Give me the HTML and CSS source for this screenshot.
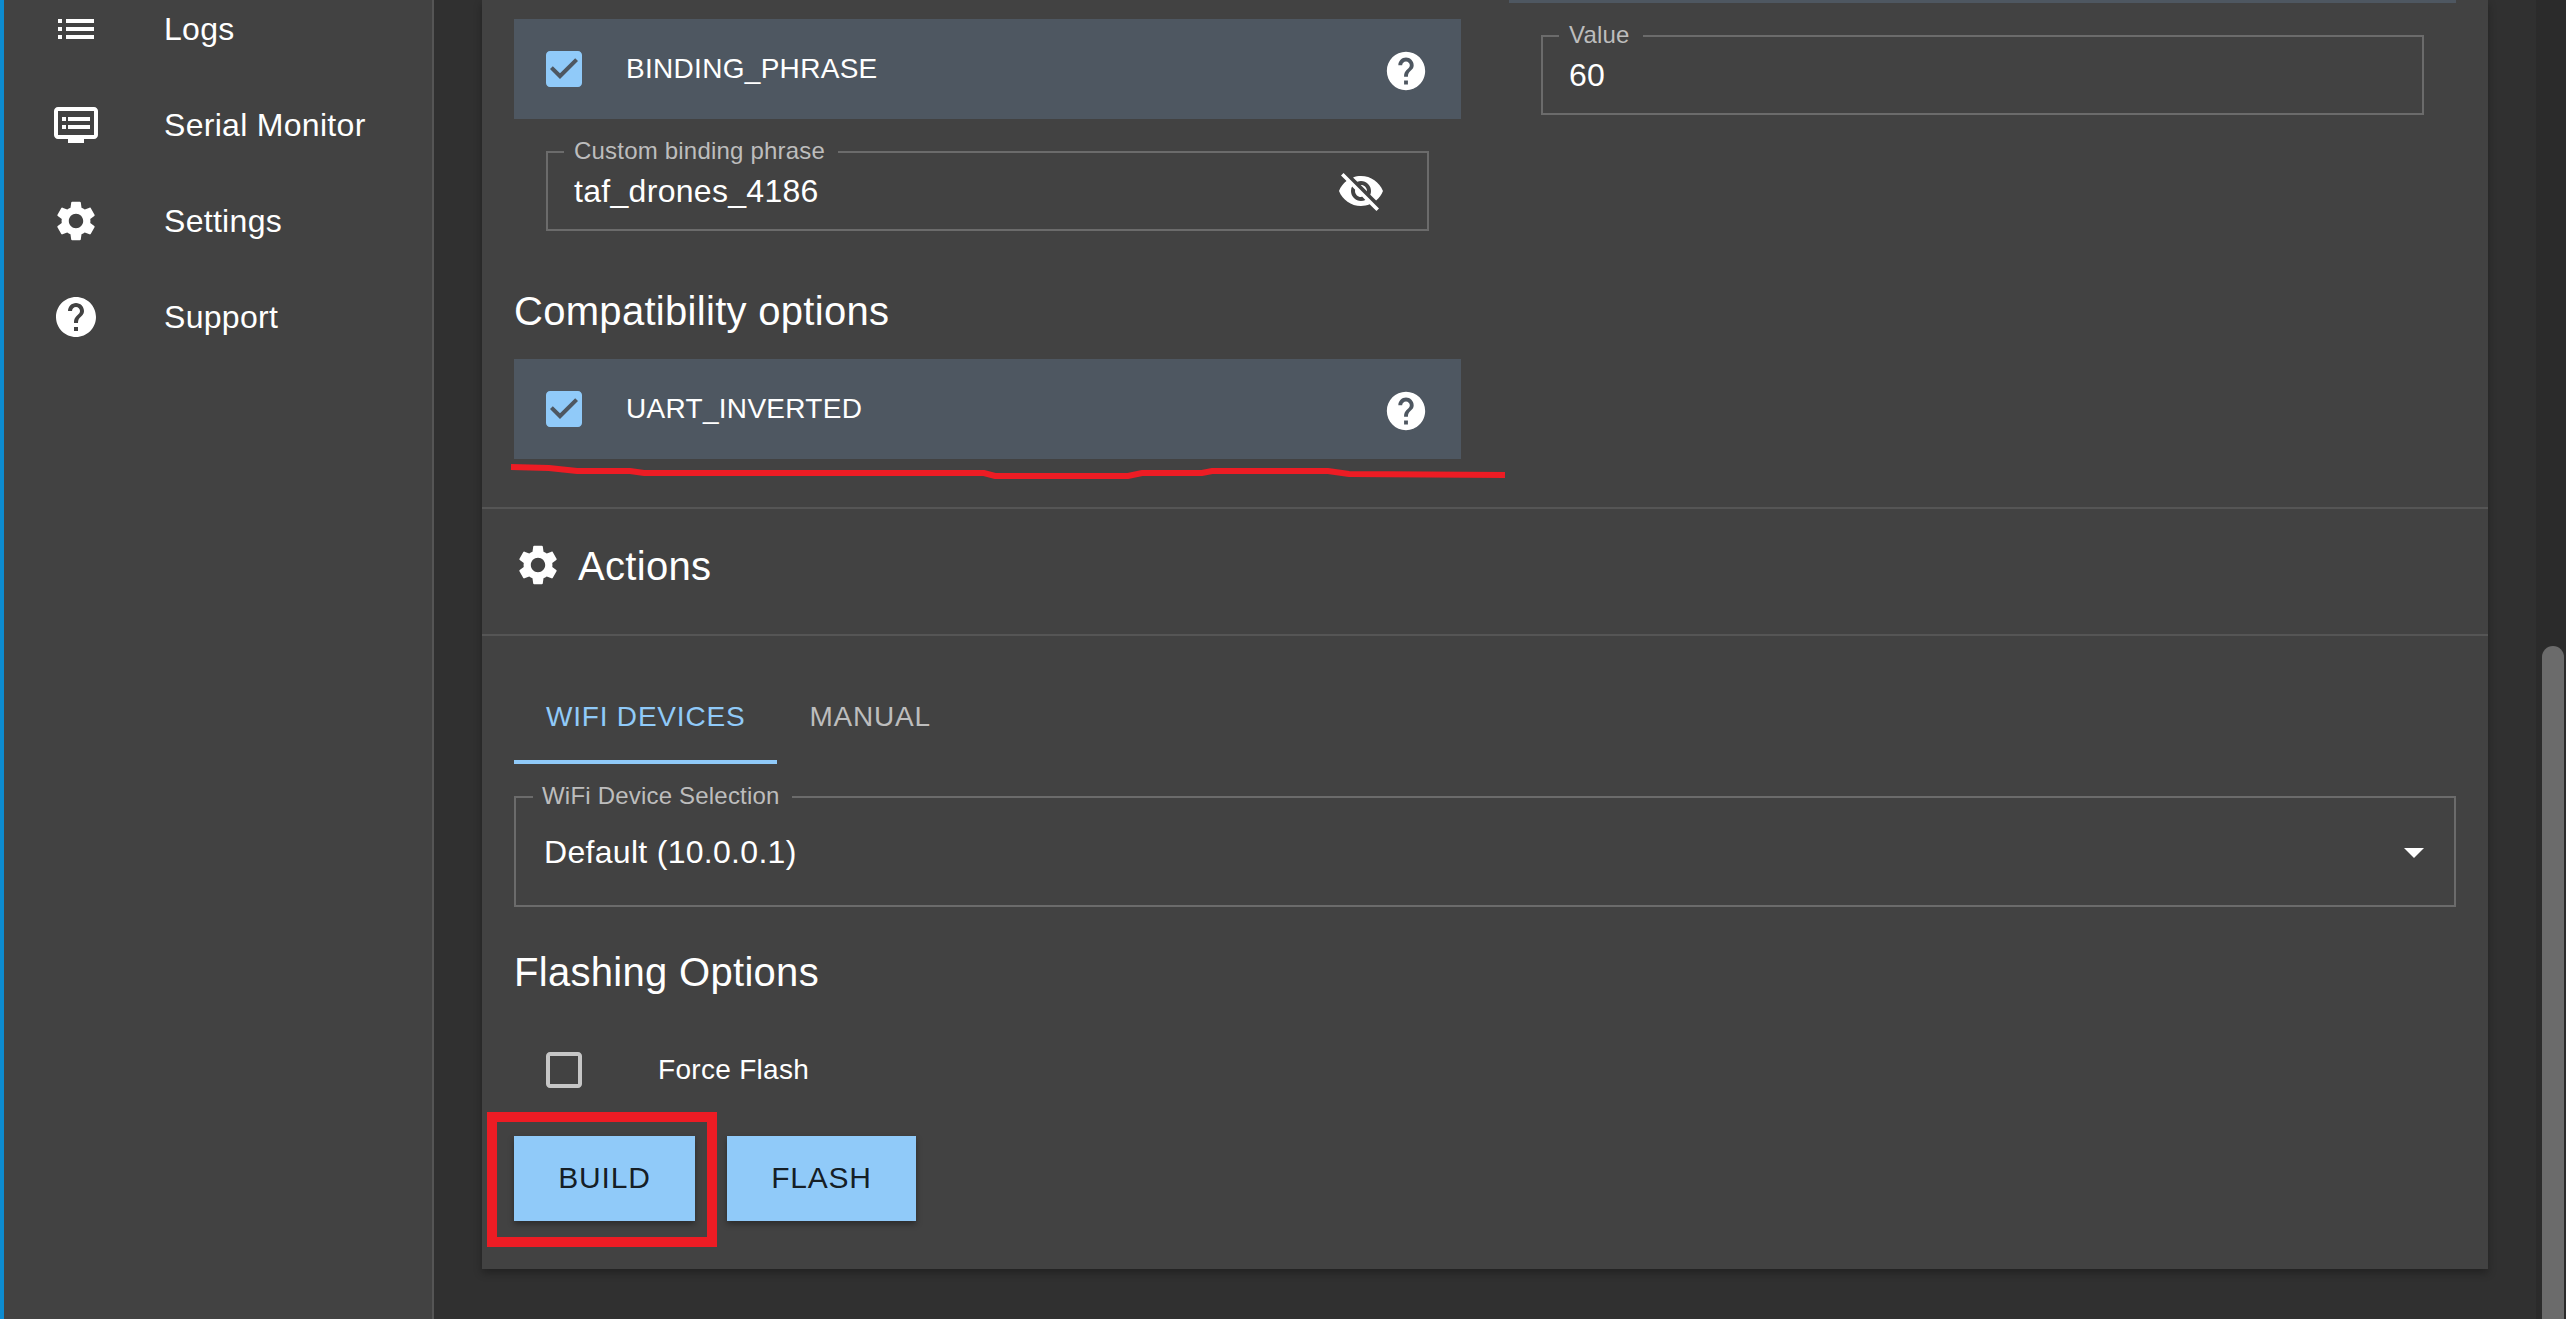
FILE: index.html
```html
<!DOCTYPE html>
<html>
<head>
<meta charset="UTF-8">
<title>ExpressLRS Configurator</title>
<link rel="stylesheet" href="styles.css">
</head>
<body>
	<div class="app">
		<div class="stripe"></div>

		<nav class="sidebar">
			<a class="nav-item">
				<svg class="icon" viewBox="0 0 24 24"><path d="M3 13h2v-2H3v2zm0 4h2v-2H3v2zm0-8h2V7H3v2zm4 4h14v-2H7v2zm0 4h14v-2H7v2zM7 7v2h14V7H7z"/></svg>
				<span>Logs</span>
			</a>
			<a class="nav-item">
				<svg class="icon" viewBox="0 0 24 24"><path d="M21 3H3c-1.1 0-2 .9-2 2v12c0 1.1.9 2 2 2h5v2h8v-2h5c1.1 0 1.99-.9 1.99-2L23 5c0-1.1-.9-2-2-2zm0 14H3V5h18v12zm-2-9H8v2h11V8zm0 4H8v2h11v-2zM7 8H5v2h2V8zm0 4H5v2h2v-2z"/></svg>
				<span>Serial Monitor</span>
			</a>
			<a class="nav-item">
				<svg class="icon" viewBox="0 0 24 24"><path d="M19.14 12.94c.04-.3.06-.61.06-.94 0-.32-.02-.64-.07-.94l2.03-1.58c.18-.14.23-.41.12-.61l-1.92-3.32c-.12-.22-.37-.29-.59-.22l-2.39.96c-.5-.38-1.03-.7-1.62-.94l-.36-2.54c-.04-.24-.24-.41-.48-.41h-3.84c-.24 0-.43.17-.47.41l-.36 2.54c-.59.24-1.13.57-1.62.94l-2.39-.96c-.22-.08-.47 0-.59.22L2.74 8.87c-.12.21-.08.47.12.61l2.03 1.58c-.05.3-.09.63-.09.94s.02.64.07.94l-2.03 1.58c-.18.14-.23.41-.12.61l1.92 3.32c.12.22.37.29.59.22l2.39-.96c.5.38 1.03.7 1.62.94l.36 2.54c.05.24.24.41.48.41h3.84c.24 0 .44-.17.47-.41l.36-2.54c.59-.24 1.13-.56 1.62-.94l2.39.96c.22.08.47 0 .59-.22l1.92-3.32c.12-.22.07-.47-.12-.61l-2.01-1.58zM12 15.6c-1.98 0-3.6-1.62-3.6-3.6s1.62-3.6 3.6-3.6 3.6 1.62 3.6 3.6-1.62 3.6-3.6 3.6z"/></svg>
				<span>Settings</span>
			</a>
			<a class="nav-item">
				<svg class="icon" viewBox="0 0 24 24"><path d="M12 2C6.48 2 2 6.48 2 12s4.48 10 10 10 10-4.48 10-10S17.52 2 12 2zm1 17h-2v-2h2v2zm2.07-7.75l-.9.92C13.45 12.9 13 13.5 13 15h-2v-.5c0-1.1.45-2.1 1.17-2.83l1.24-1.26c.37-.36.59-.86.59-1.41 0-1.1-.9-2-2-2s-2 .9-2 2H8c0-2.21 1.79-4 4-4s4 1.79 4 4c0 .88-.36 1.68-.93 2.25z"/></svg>
				<span>Support</span>
			</a>
		</nav>

		<main class="main">
			<section class="card">
				<div class="options">
					<div class="column column-left">
						<div class="option">
							<svg class="icon check" viewBox="0 0 24 24"><path d="M19 3H5c-1.11 0-2 .9-2 2v14c0 1.1.89 2 2 2h14c1.11 0 2-.9 2-2V5c0-1.1-.89-2-2-2zm-9 14l-5-5 1.41-1.41L10 14.17l7.59-7.59L19 8l-9 9z"/></svg>
							<span class="option-name">BINDING_PHRASE</span>
							<svg class="icon help" viewBox="0 0 24 24"><path d="M12 2C6.48 2 2 6.48 2 12s4.48 10 10 10 10-4.48 10-10S17.52 2 12 2zm1 17h-2v-2h2v2zm2.07-7.75l-.9.92C13.45 12.9 13 13.5 13 15h-2v-.5c0-1.1.45-2.1 1.17-2.83l1.24-1.26c.37-.36.59-.86.59-1.41 0-1.1-.9-2-2-2s-2 .9-2 2H8c0-2.21 1.79-4 4-4s4 1.79 4 4c0 .88-.36 1.68-.93 2.25z"/></svg>
						</div>
						<div class="field field-inset">
							<span class="field-label">Custom binding phrase</span>
							<span class="field-value">taf_drones_4186</span>
							<svg class="icon eye" viewBox="0 0 24 24"><path d="M12 7c2.76 0 5 2.24 5 5 0 .65-.13 1.26-.36 1.83l2.92 2.92c1.51-1.26 2.7-2.89 3.43-4.75-1.73-4.39-6-7.5-11-7.5-1.4 0-2.74.25-3.98.7l2.16 2.16C10.74 7.13 11.35 7 12 7zM2 4.27l2.28 2.28.46.46C3.08 8.3 1.78 10.02 1 12c1.73 4.39 6 7.5 11 7.5 1.55 0 3.03-.3 4.38-.84l.42.42L19.73 22 21 20.73 3.27 3 2 4.27zM7.53 9.8l1.55 1.55c-.05.21-.08.43-.08.65 0 1.66 1.34 3 3 3 .22 0 .44-.03.65-.08l1.55 1.55c-.67.33-1.41.53-2.2.53-2.76 0-5-2.24-5-5 0-.79.2-1.53.53-2.2zm4.31-.78l3.15 3.15.02-.16c0-1.66-1.34-3-3-3l-.17.01z"/></svg>
						</div>
						<h6 class="heading heading-compat">Compatibility options</h6>
						<div class="option">
							<svg class="icon check" viewBox="0 0 24 24"><path d="M19 3H5c-1.11 0-2 .9-2 2v14c0 1.1.89 2 2 2h14c1.11 0 2-.9 2-2V5c0-1.1-.89-2-2-2zm-9 14l-5-5 1.41-1.41L10 14.17l7.59-7.59L19 8l-9 9z"/></svg>
							<span class="option-name">UART_INVERTED</span>
							<svg class="icon help" viewBox="0 0 24 24"><path d="M12 2C6.48 2 2 6.48 2 12s4.48 10 10 10 10-4.48 10-10S17.52 2 12 2zm1 17h-2v-2h2v2zm2.07-7.75l-.9.92C13.45 12.9 13 13.5 13 15h-2v-.5c0-1.1.45-2.1 1.17-2.83l1.24-1.26c.37-.36.59-.86.59-1.41 0-1.1-.9-2-2-2s-2 .9-2 2H8c0-2.21 1.79-4 4-4s4 1.79 4 4c0 .88-.36 1.68-.93 2.25z"/></svg>
						</div>
					</div>
					<div class="column">
						<div class="option-edge"></div>
						<div class="field field-inset">
							<span class="field-label">Value</span>
							<span class="field-value">60</span>
						</div>
					</div>
				</div>

				<div class="card-header">
					<svg class="icon" viewBox="0 0 24 24"><path d="M19.14 12.94c.04-.3.06-.61.06-.94 0-.32-.02-.64-.07-.94l2.03-1.58c.18-.14.23-.41.12-.61l-1.92-3.32c-.12-.22-.37-.29-.59-.22l-2.39.96c-.5-.38-1.03-.7-1.62-.94l-.36-2.54c-.04-.24-.24-.41-.48-.41h-3.84c-.24 0-.43.17-.47.41l-.36 2.54c-.59.24-1.13.57-1.62.94l-2.39-.96c-.22-.08-.47 0-.59.22L2.74 8.87c-.12.21-.08.47.12.61l2.03 1.58c-.05.3-.09.63-.09.94s.02.64.07.94l-2.03 1.58c-.18.14-.23.41-.12.61l1.92 3.32c.12.22.37.29.59.22l2.39-.96c.5.38 1.03.7 1.62.94l.36 2.54c.05.24.24.41.48.41h3.84c.24 0 .44-.17.47-.41l.36-2.54c.59-.24 1.13-.56 1.62-.94l2.39.96c.22.08.47 0 .59-.22l1.92-3.32c.12-.22.07-.47-.12-.61l-2.01-1.58zM12 15.6c-1.98 0-3.6-1.62-3.6-3.6s1.62-3.6 3.6-3.6 3.6 1.62 3.6 3.6-1.62 3.6-3.6 3.6z"/></svg>
					<span class="heading">Actions</span>
				</div>

				<div class="actions">
					<div class="tabs">
						<div class="tab tab-active">WIFI DEVICES</div>
						<div class="tab">MANUAL</div>
					</div>

					<div class="field field-select">
						<span class="field-label">WiFi Device Selection</span>
						<span class="field-value">Default (10.0.0.1)</span>
						<svg class="icon arrow" viewBox="0 0 24 24"><path d="M7 10l5 5 5-5z"/></svg>
					</div>

					<h6 class="heading heading-flash">Flashing Options</h6>

					<div class="force-row">
						<svg class="icon blank" viewBox="0 0 24 24"><path d="M19 5v14H5V5h14m0-2H5c-1.1 0-2 .9-2 2v14c0 1.1.9 2 2 2h14c1.1 0 2-.9 2-2V5c0-1.1-.9-2-2-2z"/></svg>
						<span class="option-name">Force Flash</span>
					</div>

					<div class="buttons">
						<button class="btn btn-build">BUILD</button>
						<button class="btn btn-flash">FLASH</button>
					</div>
				</div>
			</section>
		</main>

		<div class="scrollbar">
			<div class="thumb"></div>
		</div>
	</div>

	<!-- red marks drawn on top of the screenshot -->
	<svg class="mark-line" viewBox="0 0 1010 20"><path d="M1 3 L39 4 L67 7 L120 7 L134 9 L474 9 L485 12 L618 12 L632 9 L692 9 L702 7 L818 7 L839 10 L995 11"/></svg>
	<div class="mark-box"></div>
</body>
</html>
```

FILE: styles.css
```css
* {
	padding: 0;
	margin: 0;
	box-sizing: border-box;
}

html, body {
	height: 100%;
	overflow: hidden;
	background-color: #303030;
}

body {
	position: relative;
	font-family: "Liberation Sans", Arial, sans-serif;
	color: #fff;
}

.app {
	display: flex;
	height: 1319px;
}

.stripe {
	width: 4px;
	background-color: #0c8bd0;
}

.icon {
	width: 48px;
	height: 48px;
	flex: none;
	fill: #fff;
	display: block;
}

/* sidebar, scrolled so the top items are off the page */
.sidebar {
	width: 430px;
	flex: none;
	background-color: #424242;
	border-right: 2px solid #555;
	overflow: hidden;
}

.nav-item {
	display: flex;
	align-items: center;
	gap: 64px;
	height: 96px;
	padding-left: 48px;
	font-size: 32px;
	letter-spacing: 0.3px;
}

.nav-item:first-child {
	margin-top: -19px;
}

.main {
	flex: 1;
	padding: 0 48px;
	overflow: hidden;
}

.card {
	height: 1269px;
	background-color: #424242;
	box-shadow: 0 4px 8px rgba(0, 0, 0, 0.3);
}

.options {
	display: grid;
	grid-template-columns: 947px 947px;
	gap: 48px;
	padding: 0 32px 48px;
	border-bottom: 2px solid #555;
}

.column-left {
	padding-top: 19px;
}

.option {
	display: flex;
	align-items: center;
	height: 100px;
	padding: 0 32px 0 26px;
	background-color: #4e5761;
}

.option-edge {
	height: 3px;
	background-color: #4e5761;
}

.option-name {
	font-size: 28px;
	letter-spacing: 0.3px;
}

.option .option-name {
	margin-left: 38px;
	margin-top: -1px;
	flex: 1;
}

.check {
	fill: #90caf9;
}

.help {
	width: 46px;
	height: 46px;
	margin-top: 4px;
}

.field {
	position: relative;
	display: flex;
	align-items: center;
	justify-content: space-between;
	height: 80px;
	border: 2px solid #6b6b6b;
	font-size: 32px;
	letter-spacing: 0.3px;
}

.field-inset {
	margin: 32px 32px 0;
	padding: 0 42px 0 26px;
}

.field-label {
	position: absolute;
	top: -15px;
	left: 16px;
	padding: 0 13px 0 10px;
	background-color: #424242;
	color: #bdbdbd;
	font-size: 24px;
	line-height: 26px;
	letter-spacing: 0.2px;
}

.heading {
	font-size: 40px;
	font-weight: 400;
	line-height: 64px;
	letter-spacing: 0.3px;
}

.heading-compat {
	margin: 48px 0 16px;
}

.card-header {
	display: flex;
	align-items: center;
	gap: 16px;
	height: 127px;
	padding: 0 0 14px 32px;
	border-bottom: 2px solid #555;
}

.card-header .heading {
	margin-top: 2px;
}

.actions {
	padding: 32px 32px 0;
}

.tabs {
	display: flex;
}

.tab {
	height: 96px;
	padding: 0 32px;
	line-height: 97px;
	font-size: 28px;
	letter-spacing: 0.8px;
	color: #bdbdbd;
}

.tab-active {
	color: #90caf9;
	border-bottom: 4px solid #90caf9;
}

.field-select {
	height: 111px;
	margin-top: 32px;
	padding: 1px 16px 0 28px;
}

.field-select .field-label {
	left: 17px;
	padding: 0 12px 0 9px;
}

.heading-flash {
	margin-top: 33px;
}

.force-row {
	display: flex;
	align-items: center;
	gap: 70px;
	height: 48px;
	margin-top: 42px;
	padding-left: 26px;
}

.blank {
	fill: #c6c6c6;
}

.buttons {
	display: flex;
	gap: 32px;
	margin-top: 42px;
}

.btn {
	height: 85px;
	padding-bottom: 2px;
	border: 0;
	background-color: #90caf9;
	color: rgba(0, 0, 0, 0.87);
	font-family: "Liberation Sans", Arial, sans-serif;
	font-size: 30px;
	letter-spacing: 0.8px;
	box-shadow: 0 3px 6px rgba(0, 0, 0, 0.35);
}

.btn-build {
	width: 181px;
}

.btn-flash {
	width: 189px;
}

.scrollbar {
	width: 30px;
	flex: none;
	padding: 646px 2px 0 6px;
	background-color: #2b2b2b;
}

.thumb {
	height: 100%;
	background-color: #6b6b6b;
	border-radius: 11px 11px 0 0;
}

/* annotations */
.mark-line {
	position: absolute;
	left: 510px;
	top: 464px;
	width: 1010px;
	height: 20px;
}

.mark-line path {
	fill: none;
	stroke: #ed1c24;
	stroke-width: 6;
}

.mark-box {
	position: absolute;
	left: 487px;
	top: 1112px;
	width: 230px;
	height: 135px;
	border: 10px solid #ed1c24;
}
```
